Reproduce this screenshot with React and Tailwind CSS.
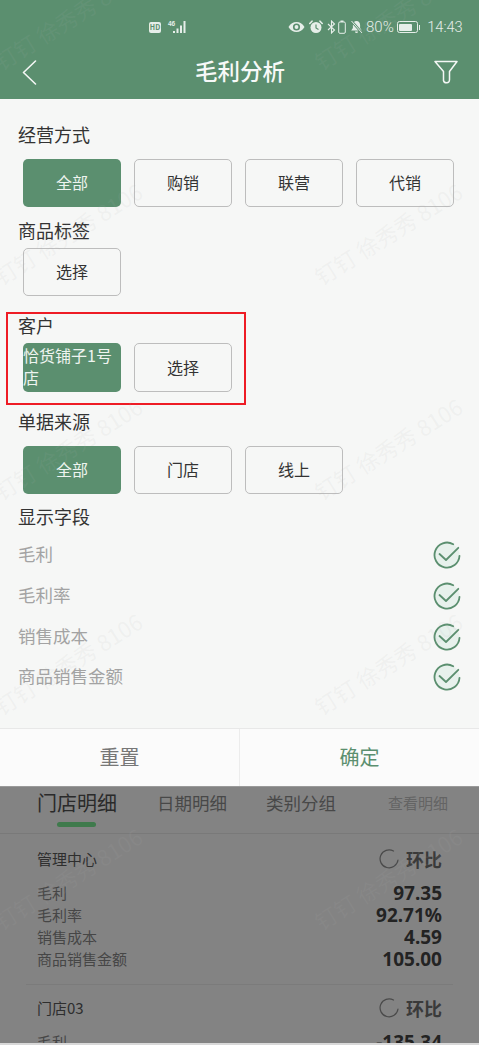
import React from "react"

const GREEN = "bg-[#5b8f6f]"

const marks = [
  "left-[-32px] top-[2px]", "left-[288px] top-[2px]",
  "left-[-32px] top-[217px]", "left-[288px] top-[217px]",
  "left-[-32px] top-[432px]", "left-[288px] top-[432px]",
  "left-[-32px] top-[647px]", "left-[288px] top-[647px]",
  "left-[-32px] top-[862px]", "left-[288px] top-[862px]",
]

const Label = ({ children, className = "" }) => (
  <div className={`h-[26px] pb-[2px] flex items-center text-[18px] text-[#333] ${className}`}>{children}</div>
)

const Btn = ({ active, children, className = "h-12" }) => (
  <div
    className={`w-[98px] ${className} pb-[2px] rounded-[5px] flex items-center justify-center text-[16px] ${
      active ? `${GREEN} text-[#eef4f0]` : "border border-[#bdbdbd] text-[#333]"
    }`}
  >
    {children}
  </div>
)

const CheckIcon = () => (
  <svg width="28" height="28" viewBox="0 0 28 28" fill="none">
    <circle cx="14" cy="14" r="12.5" fill="#e7f1ec" />
    <path
      d="M20.2 3.2A12.5 12.5 0 1 0 26.5 14.8"
      stroke="#5b8f6f"
      strokeWidth="1.8"
      strokeLinecap="round"
    />
    <path
      d="M6.5 13L13 19L25.3 6.8"
      stroke="#5b8f6f"
      strokeWidth="1.8"
      strokeLinecap="round"
      strokeLinejoin="round"
    />
  </svg>
)

const Spinner = () => (
  <svg width="20" height="20" viewBox="0 0 20 20" fill="none">
    <path d="M14.5 2A9 9 0 1 0 19 11" stroke="#4a4a4a" strokeWidth="1.2" strokeLinecap="round" />
  </svg>
)

const StatusBar = () => (
  <div className="h-[45px] pl-[149px] pt-[9px] flex items-center text-[#e6eee9]">
    <div className="w-[12px] h-[11px] rounded-[2px] bg-[#e6eee9] text-[7px] font-bold leading-none text-[#5b8f6f] flex items-center justify-center">
      HD
    </div>
    <svg width="23" height="14" viewBox="0 0 23 14" className="ml-[4px]" fill="#e6eee9">
      <text x="3" y="6" fontSize="6.5" fontWeight="700" fontFamily="Liberation Sans">46</text>
      <rect x="8" y="11" width="2" height="2" />
      <rect x="11.5" y="8.5" width="2" height="4.5" />
      <rect x="15" y="5.5" width="2" height="7.5" />
      <rect x="18.5" y="1" width="2" height="12" />
    </svg>
    {/* eye */}
    <svg width="17" height="12" viewBox="0 0 17 12" className="ml-[100px]" fill="#e6eee9">
      <path fillRule="evenodd" d="M.5 6C2.5 2.500 5.200 1 8.500 1s6 1.500 8 5c-2 3.500-4.700 5-8 5s-6-1.500-8-5zm8 3.600a3.600 3.600 0 1 0 0-7.200 3.600 3.600 0 0 0 0 7.200zm0-1.700a1.900 1.900 0 1 1 0-3.800 1.900 1.900 0 0 1 0 3.800z" />
    </svg>
    {/* alarm */}
    <svg width="14" height="14" viewBox="0 0 14 14" className="ml-[4px]">
      <circle cx="7" cy="7.500" r="5.500" fill="#e6eee9" />
      <path d="M.8 3.500L3 1.200M13.200 3.500L11 1.200" stroke="#e6eee9" strokeWidth="1.6" strokeLinecap="round" />
      <path d="M7 4.500V8L9.500 9.500" stroke="#5b8f6f" strokeWidth="1.200" fill="none" />
    </svg>
    {/* bluetooth + vibrate battery */}
    <svg width="9" height="14" viewBox="0 0 9 14" className="ml-[4px]" fill="none">
      <path d="M1 4L7.500 10L4.500 13V1L7.500 4L1 10" stroke="#e6eee9" strokeWidth="1.100" />
    </svg>
    <svg width="8" height="14" viewBox="0 0 8 14" className="ml-[2px]" fill="none">
      <rect x="2.500" y="0.500" width="3" height="1.500" fill="#e6eee9" />
      <rect x="0.700" y="2" width="6.600" height="11.300" rx="1.200" stroke="#e6eee9" strokeWidth="1" />
    </svg>
    {/* muted bell */}
    <svg width="13" height="14" viewBox="0 0 13 14" className="ml-[4px]" fill="#e6eee9">
      <path d="M6.500 1c2.400 0 3.600 1.800 3.600 4v3l1.700 2.600H1.200L2.900 8V5c0-2.200 1.200-4 3.600-4zM5 11.600h3a1.500 1.500 0 0 1-3 0z" />
      <path d="M1.500 1L12 13" stroke="#5b8f6f" strokeWidth="2.600" />
      <path d="M1.500 1L12 13" stroke="#e6eee9" strokeWidth="1" />
    </svg>
    <span className="ml-[3px] text-[15px] leading-none font-['Roboto',sans-serif] font-light">80%</span>
    {/* battery */}
    <div className="ml-[3px] flex items-center">
      <div className="w-[21px] h-[12px] rounded-[2.500px] border border-[#e6eee9] p-[1.500px]">
        <div className="w-[80%] h-full bg-[#e6eee9] rounded-[1px]" />
      </div>
      <div className="w-[1.500px] h-[5px] ml-[1px] bg-[#e6eee9]" />
    </div>
    <span className="ml-[7px] text-[14.600px] leading-none font-['Roboto',sans-serif] font-light">14:43</span>
  </div>
)

const Header = () => (
  <div className={`${GREEN} h-[99px] shrink-0`}>
    <StatusBar />
    <div className="h-[54px] px-[22px] flex items-center justify-between">
      <div className="w-[24px]">
        <svg width="15" height="25" viewBox="0 0 15 25" fill="none" className="block">
          <path d="M13.500 1L1.500 12.500L13.500 24" stroke="#f4f7f5" strokeWidth="1.600" strokeLinecap="round" strokeLinejoin="round" />
        </svg>
      </div>
      <div className="text-[22.500px] pb-[3px] text-[#f7f9f8] font-medium">毛利分析</div>
      <svg width="24" height="24" viewBox="0 0 24 24" fill="none" className="-mr-[1px]">
        <path
          d="M1 1.500H23L15.500 11.500V19.500Q15.500 23 12.500 22.800Q10 22.800 9.500 20.500V11.500Z"
          stroke="#f4f7f5"
          strokeWidth="1.500"
          strokeLinejoin="round"
        />
      </svg>
    </div>
  </div>
)

const fields = ["毛利", "毛利率", "销售成本", "商品销售金额"]

const FilterPanel = () => (
  <div className="h-[629px] shrink-0 bg-[#f6f7f6] pl-[18px] pr-[18px] pt-[23px]">
    <Label>经营方式</Label>
    <div className="flex gap-[13px] pl-[5px] mt-[11px]">
      <Btn active>全部</Btn>
      <Btn>购销</Btn>
      <Btn>联营</Btn>
      <Btn>代销</Btn>
    </div>
    <Label className="mt-[11px]">商品标签</Label>
    <div className="flex pl-[5px] mt-[4px]">
      <Btn>选择</Btn>
    </div>
    <Label className="mt-[17px]">客户</Label>
    <div className="flex gap-[13px] pl-[5px] mt-[4px]">
      <div className={`w-[98px] h-[49px] rounded-[5px] ${GREEN} text-[16px] leading-[22px] pt-[1px] text-[#eef4f0]`}>
        恰货铺子1号店
      </div>
      <Btn className="h-[49px]">选择</Btn>
    </div>
    <Label className="mt-[17px]">单据来源</Label>
    <div className="flex gap-[13px] pl-[5px] mt-[11px]">
      <Btn active>全部</Btn>
      <Btn>门店</Btn>
      <Btn>线上</Btn>
    </div>
    <Label className="mt-[10px]">显示字段</Label>
    <div className="mt-[5px]">
      {fields.map((f) => (
        <div key={f} className="h-[40.670px] flex items-center justify-between text-[17.500px] text-[#a3a3a3]">
          <span className="pb-[2px]">{f}</span>
          <CheckIcon />
        </div>
      ))}
    </div>
  </div>
)

const Footer = () => (
  <div className="h-[58px] shrink-0 bg-[#fbfbfb] border-t border-[#e8e8e8] flex text-[20px]">
    <div className="w-[240px] pb-[2px] border-r border-[#ececec] flex items-center justify-center text-[#777]">重置</div>
    <div className="flex-1 pb-[2px] flex items-center justify-center text-[#5b8f6f]">确定</div>
  </div>
)

const Store = ({ name, rows }) => (
  <div className="px-[37px]">
    <div className="h-[24px] flex items-center justify-between">
      <span className="text-[15px] text-[#2e2e2e]">{name}</span>
      <div className="flex items-center gap-[7px]">
        <Spinner />
        <span className="text-[18px] font-bold text-[#3a3a3a]">环比</span>
      </div>
    </div>
    <div className="mt-[11px]">
      {rows.map(([k, v]) => (
        <div key={k} className="h-[22px] flex items-center justify-between">
          <span className="text-[15px] text-[#464646]">{k}</span>
          <span className="text-[19px] font-bold text-[#232323] font-['Noto_Sans',sans-serif]">{v}</span>
        </div>
      ))}
    </div>
  </div>
)

const Behind = () => (
  <div className="flex-1 min-h-0 overflow-hidden bg-[#838383] border-t border-[#9a9a9a] relative">
    <div className="h-[47px] pl-[37px] pr-[31px] flex items-start border-b border-[#797979]">
      <div className="relative w-[79px]">
        <div className="text-[20px] leading-[32px] text-[#2a2a2a] whitespace-nowrap">门店明细</div>
        <div className="absolute left-[20px] top-[35px] w-[39px] h-[5px] rounded-full bg-[#3f7a4c]" />
      </div>
      <div className="ml-[41px] text-[17.500px] leading-[32px] text-[#484848]">日期明细</div>
      <div className="ml-[39px] text-[17.500px] leading-[32px] text-[#484848]">类别分组</div>
      <div className="ml-auto text-[15px] leading-[32px] text-[#646464]">查看明细</div>
    </div>
    <div className="pt-[13px]">
      <Store
        name="管理中心"
        rows={[
          ["毛利", "97.35"],
          ["毛利率", "92.71%"],
          ["销售成本", "4.59"],
          ["商品销售金额", "105.00"],
        ]}
      />
    </div>
    <div className="mt-[14px] border-t border-[#7b7b7b] mx-[26px]" />
    <div className="pt-[11px]">
      <Store name="门店03" rows={[["毛利", "-135.34"]]} />
    </div>
    <div className="absolute left-0 right-0 bottom-0 h-[2px] bg-[#d8d8d8]" />
  </div>
)

const App = () => {
  return (
    <div className="relative w-[479px] h-[1045px] overflow-hidden flex flex-col font-['Noto_Sans_CJK_SC','Noto_Sans',sans-serif]">
      <Header />
      <FilterPanel />
      <Footer />
      <Behind />

      {/* red annotation box */}
      <div className="absolute left-[6px] top-[312px] w-[240px] h-[93px] border-2 border-[#ee1c25] pointer-events-none" />

      {/* watermark */}
      {marks.map((m) => (
        <div
          key={m}
          className={`absolute ${m} w-[200px] text-center text-[22px] whitespace-nowrap -rotate-[32deg] text-[#b0b0b0]/10 pointer-events-none`}
        >
          钉钉 徐秀秀 8106
        </div>
      ))}
    </div>
  )
}

export default App
